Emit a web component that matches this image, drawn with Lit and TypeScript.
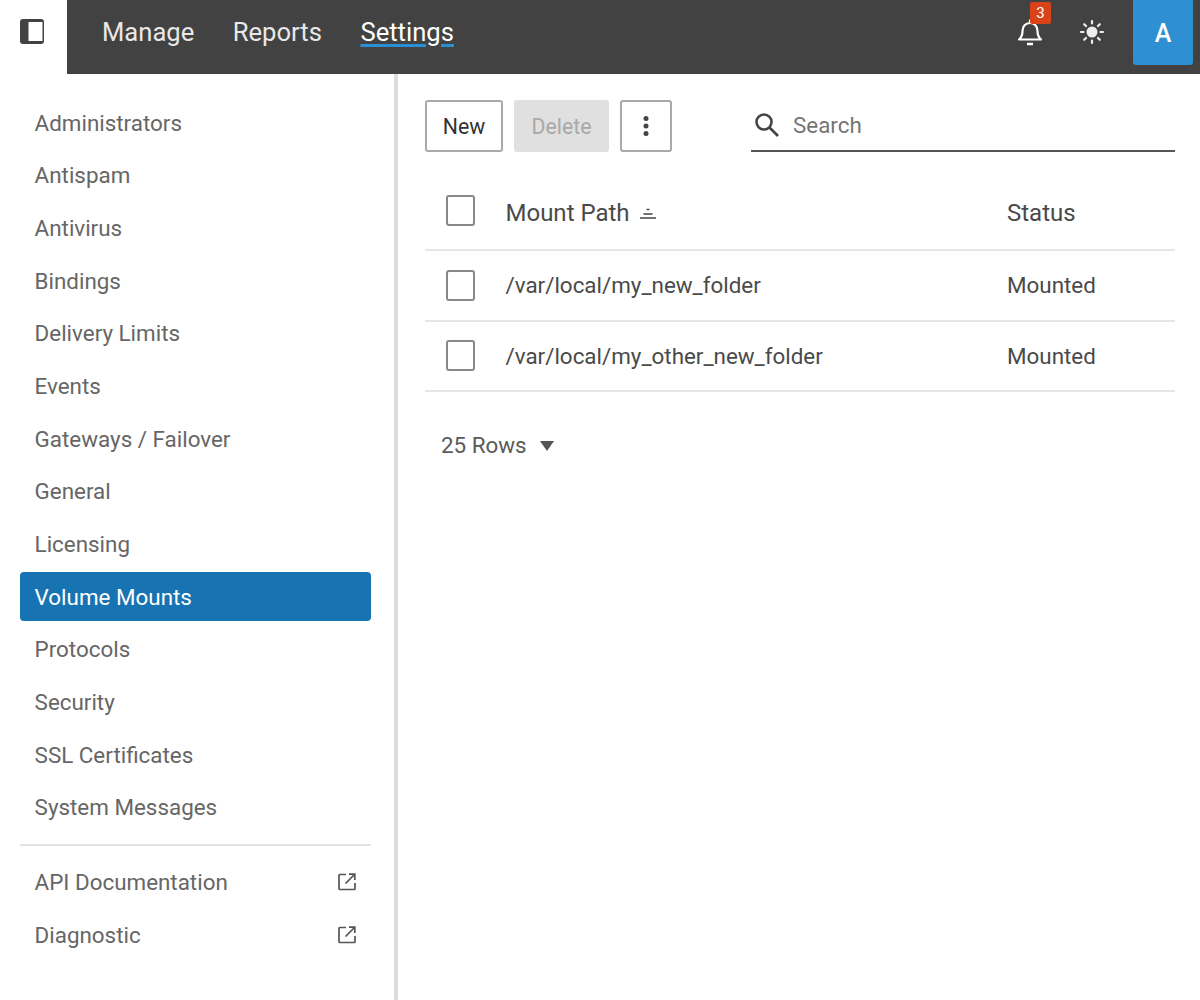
import { LitElement, html, css, svg } from "lit";
import { customElement } from "lit/decorators.js";

const NAV = ["Administrators","Antispam","Antivirus","Bindings","Delivery Limits","Events","Gateways / Failover","General","Licensing","Volume Mounts","Protocols","Security","SSL Certificates","System Messages"];
const ROWS = ["/var/local/my_new_folder","/var/local/my_other_new_folder"];
const ext = svg`<svg class="ext" viewBox="0 0 18 18" fill="none" stroke="#555" stroke-width="1.7"><path d="M8 1.500H1.800a.8.8 0 0 0-.8.8v13.400a.8.8 0 0 0 .8.8h14.400a.8.8 0 0 0 .8-.8V10"/><path d="M11 1.200h5.800V7M16.500 1.500 7.500 10.500"/></svg>`;

@customElement("app-root")
export class AppRoot extends LitElement {
  static styles = css`
    :host { display:block; width:1200px; height:1000px; overflow:hidden; background:#fff; font-family:Roboto,sans-serif; color:#444; }
    * { box-sizing:border-box; }
    .top { display:flex; height:74px; }
    .toggle { width:67px; display:flex; padding:19px 0 0 20px; }
    .toggle svg { width:24px; height:25px; }
    .bar { flex:1; background:#424242; display:flex; align-items:flex-start; padding:0 7px 0 35px; }
    .menu { display:flex; gap:38.5px; flex:1; padding-top:15px; }
    .menu a { font-size:25.6px; line-height:34px; color:#e8e8e8; }
    .menu a.on { color:#fff; text-decoration:underline; text-decoration-color:#2a8fd4; text-decoration-thickness:3px; text-underline-offset:3px; }
    .bell { position:relative; width:26px; height:28px; margin:18px 0 0 -2px; }
    .bell svg { width:26px; height:28px; display:block; }
    .badge { position:absolute; left:13px; top:-16px; width:21px; height:22px; border-radius:2px; background:#d9431a; color:#fff; font-size:15px; line-height:22px; text-align:center; }
    .sun { width:28px; height:28px; margin:18px 0 0 35px; }
    .avatar { width:60px; height:65px; margin-left:27px; background:#2f8fd3; color:#fff; border-radius:0 0 3px 3px; font-size:25px; font-weight:500; display:flex; align-items:center; justify-content:center; padding-top:1px; }
    .body { display:flex; height:926px; }
    .side { width:398px; flex:none; border-right:4px solid #ddd; padding:24px 23px 0 20px; }
    .item { height:49px; margin-bottom:3.7px; padding:0 15px 0 14.6px; display:flex; align-items:center; justify-content:space-between; font-size:22.4px; color:#666; border-radius:4px; }
    .item.on { background:#1773b1; color:#fff; }
    .rule { border-top:2px solid #e2e2e2; margin:12px 0; }
    .ext { width:18px; height:18px; }
    .main { flex:1; padding:26px 25px 0 27px; }
    .tools { display:flex; align-items:flex-start; height:52px; }
    .btn { height:52px; border:2px solid #aaa; border-radius:3px; display:flex; align-items:center; justify-content:center; font-size:21.3px; color:#333; background:#fff; }
    .new { width:78px; }
    .del { width:95px; margin-left:11px; background:#e0e0e0; border-color:#e0e0e0; color:#a8a8a8; }
    .more { width:52px; margin-left:11px; }
    .more svg { width:6px; height:22px; }
    .search { margin-left:79px; flex:1; height:52px; border-bottom:2px solid #555; display:flex; align-items:center; gap:13px; padding:0 0 0 3px; font-size:22.4px; color:#757575; }
    .search svg { width:26px; height:26px; }
    .table { margin-top:25px; }
    .row { display:grid; grid-template-columns:80.5px 1fr 168px; align-items:center; height:70.5px; border-bottom:2px solid #e6e6e6; font-size:22.4px; color:#4a4a4a; }
    .row.head { height:74px; font-size:24px; }
    .check { width:29px; height:31px; margin-left:21px; border:2px solid #888; border-radius:3px; }
    .head .check { margin-top:-6px; }
    .mp { display:flex; align-items:center; gap:10px; }
    .mp svg { width:16px; height:14px; }
    .rows { display:flex; align-items:center; gap:13px; margin:40px 0 0 16px; font-size:22.4px; color:#5a5a5a; }
    .caret { width:0; height:0; margin-top:2px; border-left:7.5px solid transparent; border-right:7.5px solid transparent; border-top:10px solid #555; }
  `;
  render() {
    return html`
      <div class="top">
        <div class="toggle"><svg viewBox="0 0 24 25"><rect x="0" y="0" width="24" height="25" rx="3" fill="#424242"/><rect x="8.500" y="3" width="14" height="19" fill="#fff"/></svg></div>
        <div class="bar">
          <div class="menu"><a>Manage</a><a>Reports</a><a class="on">Settings</a></div>
          <div class="bell">
            <svg viewBox="0 0 26 28" fill="none" stroke="#fff" stroke-width="2.200" stroke-linejoin="round"><path d="M2 21.500c2.500-2 3.500-4.500 3.500-8.500C5.500 8.500 8.500 5 13 5s7.500 3.500 7.500 8c0 4 1 6.500 3.500 8.500z"/><path d="M13 1.500V5"/><path d="M10 26h6" stroke-width="2.500"/></svg>
            <div class="badge">3</div>
          </div>
          <svg class="sun" viewBox="0 0 28 28" fill="#eee" stroke="#eee" stroke-width="2.200" stroke-linecap="round"><circle cx="14" cy="14" r="5.500" stroke="none"/><path d="M14 3v2.500M14 22.500V25M3 14h2.500M22.500 14H25M6.200 6.200 8 8M20 20l1.800 1.800M6.200 21.800 8 20M20 8l1.800-1.800"/></svg>
          <div class="avatar">A</div>
        </div>
      </div>
      <div class="body">
        <div class="side">
          ${NAV.map(n => html`<div class="item ${n === "Volume Mounts" ? "on" : ""}">${n}</div>`)}
          <div class="rule"></div>
          <div class="item">API Documentation ${ext}</div>
          <div class="item">Diagnostic ${ext}</div>
        </div>
        <div class="main">
          <div class="tools">
            <div class="btn new">New</div>
            <div class="btn del">Delete</div>
            <div class="btn more"><svg viewBox="0 0 6 22" fill="#444"><circle cx="3" cy="3.500" r="2.500"/><circle cx="3" cy="11" r="2.500"/><circle cx="3" cy="18.500" r="2.500"/></svg></div>
            <div class="search"><svg viewBox="0 0 26 26" fill="none" stroke="#444" stroke-width="2.600"><circle cx="10" cy="10" r="7.500"/><path d="m15.500 15.500 8.500 8.500"/></svg>Search</div>
          </div>
          <div class="table">
            <div class="row head"><div class="check"></div><div class="mp">Mount Path <svg viewBox="0 0 16 14" stroke="#444" stroke-width="1.500"><path d="M6.500 3.500h3M3.500 8h9M0 12h16"/></svg></div><div>Status</div></div>
            ${ROWS.map(r => html`<div class="row"><div class="check"></div><div>${r}</div><div>Mounted</div></div>`)}
          </div>
          <div class="rows">25 Rows <span class="caret"></span></div>
        </div>
      </div>
    `;
  }
}
